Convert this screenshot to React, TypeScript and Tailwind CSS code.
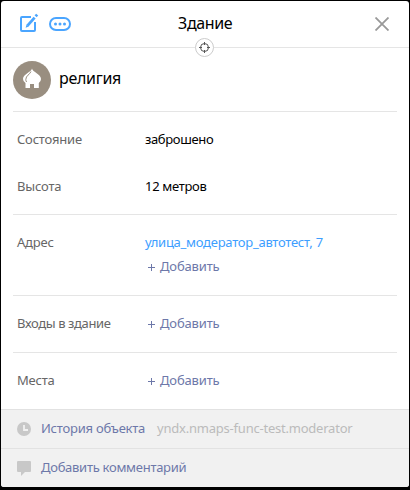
import type { ReactNode } from 'react';

function AddLink() {
  return (
    <a className="flex h-6 items-center tracking-[-0.15px] text-[#6d78a9]">
      <svg width="7" height="7" className="mt-[3px] ml-[3px] mr-[5px]" stroke="currentColor" shapeRendering="crispEdges">
        <path d="M3.5 0v7M0 3.5h7" />
      </svg>
      Добавить
    </a>
  );
}

function Row({ label, labelClass = 'tracking-[-0.2px]', children }: { label: string; labelClass?: string; children: ReactNode }) {
  return (
    <div className="flex items-start">
      <div className={`h-6 w-[132px] pl-1 leading-6 text-[#666] ${labelClass}`}>{label}</div>
      <div className="leading-6">{children}</div>
    </div>
  );
}

export default function App() {
  return (
    <div className="h-[490px] w-[410px] bg-black px-px pt-px font-['Noto_Sans',sans-serif] text-[13px] text-black">
      <div className="flex h-[486px] flex-col overflow-hidden rounded-[3px] bg-white">
        <header className="relative flex h-[47px] shrink-0 items-center border-b border-[#e5e5e5]">
          <svg width="20" height="20" viewBox="0 0 20 20" className="mb-1 ml-[18px]" fill="none" stroke="#4aa5ff" strokeWidth="2">
            <path d="M12 5H3a1 1 0 0 0-1 1v12a1 1 0 0 0 1 1h12a1 1 0 0 0 1-1V10" />
            <path d="M8.500 13.700L15.600 5.600" strokeWidth="2.8" />
            <path d="M6.600 15.700l1-3.300 2.200 2z" fill="#4aa5ff" stroke="none" />
            <path d="M16.600 4.300l1.600-1.700" strokeWidth="2.8" />
          </svg>
          <svg width="22" height="14" viewBox="0 0 22 14" className="ml-[10px]" fill="none" stroke="#4aa5ff" strokeWidth="2">
            <rect x="1" y="1" width="20" height="12" rx="6" />
            <g fill="#4aa5ff" stroke="none">
              <circle cx="6.5" cy="7" r="1.5" />
              <circle cx="11" cy="7" r="1.5" />
              <circle cx="15.5" cy="7" r="1.5" />
            </g>
          </svg>
          <h1 className="flex-1 pb-[2px] pl-[107px] text-base tracking-[-0.35px]">Здание</h1>
          <svg width="14" height="14" viewBox="0 0 14 14" className="mr-5" stroke="#999" strokeWidth="1.8">
            <path d="M.5 .5l13 13M13.5 .5l-13 13" />
          </svg>
          <div className="absolute top-[37px] left-[194px] flex size-[19px] items-center justify-center rounded-full border border-[#ccc] bg-white">
            <svg width="11" height="11" viewBox="0 0 11 11" fill="none" stroke="#555">
              <circle cx="5.5" cy="5.5" r="4" />
              <path d="M5.5 0v3M5.5 8v3M0 5.5h3M8 5.5h3" />
            </svg>
          </div>
        </header>

        <main className="flex flex-1 flex-col px-3">
          <div className="flex h-16 items-center gap-2 border-b border-[#e5e5e5] text-base tracking-[-0.3px]">
            <svg width="38" height="38" viewBox="0 0 38 38">
              <circle cx="19" cy="19" r="19" fill="#998e80" />
              <path
                fill="#fff"
                d="M19 7.500C19.500 11 28 13 28 18Q28 20.500 25.800 22V27H21V23H17V27H12.500V22Q10 20.500 10 18C10 13 18.500 11 19 7.500Z"
              />
              <path d="M18 10.500C17 13.500 12.800 14.500 12.800 18.500Q12.800 20 13.600 21" fill="none" stroke="#998e80" />
            </svg>
            <span className="pb-[3px]">религия</span>
          </div>
          <section className="flex h-[103px] flex-col gap-[23px] border-b border-[#e5e5e5] pt-[15px]">
            <Row label="Состояние"><span className="tracking-[-0.35px]">заброшено</span></Row>
            <Row label="Высота"><span className="tracking-[-0.3px]">12 метров</span></Row>
          </section>
          <section className="h-[81px] border-b border-[#e5e5e5] pt-[15px]">
            <Row label="Адрес">
              <a className="tracking-[-0.26px] text-[#3d9eff]">улица_модератор_автотест, 7</a>
              <AddLink />
            </Row>
          </section>
          <section className="h-[57px] border-b border-[#e5e5e5] pt-[15px]">
            <Row label="Входы в здание" labelClass="tracking-[-0.38px]"><AddLink /></Row>
          </section>
          <section className="pt-[15px]">
            <Row label="Места"><AddLink /></Row>
          </section>
        </main>

        <footer className="shrink-0 bg-[#f1f1f1] text-[#6d78a9]">
          <div className="flex h-[39px] items-center border-t border-[#e2e2e2] pl-4">
            <svg width="14" height="14" viewBox="0 0 14 14" className="mr-[10px]">
              <circle cx="7" cy="7" r="7" fill="#c8c8c8" />
              <path d="M7 3v5h4" fill="none" stroke="#f1f1f1" strokeWidth="1.8" />
            </svg>
            <a className="tracking-[-0.23px]">История объекта</a>
            <span className="ml-3 tracking-[-0.22px] text-[#bbb]">yndx.nmaps-func-test.moderator</span>
          </div>
          <div className="flex h-[39px] items-center border-t border-[#e2e2e2] pl-4">
            <svg width="14" height="15" viewBox="0 0 14 15" className="mr-[10px]" fill="#c8c8c8">
              <path d="M1 0h12a1 1 0 0 1 1 1v9a1 1 0 0 1-1 1H8l-4 4v-4H1a1 1 0 0 1-1-1V1a1 1 0 0 1 1-1z" />
            </svg>
            <a className="tracking-[-0.28px]">Добавить комментарий</a>
          </div>
        </footer>
      </div>
    </div>
  );
}
